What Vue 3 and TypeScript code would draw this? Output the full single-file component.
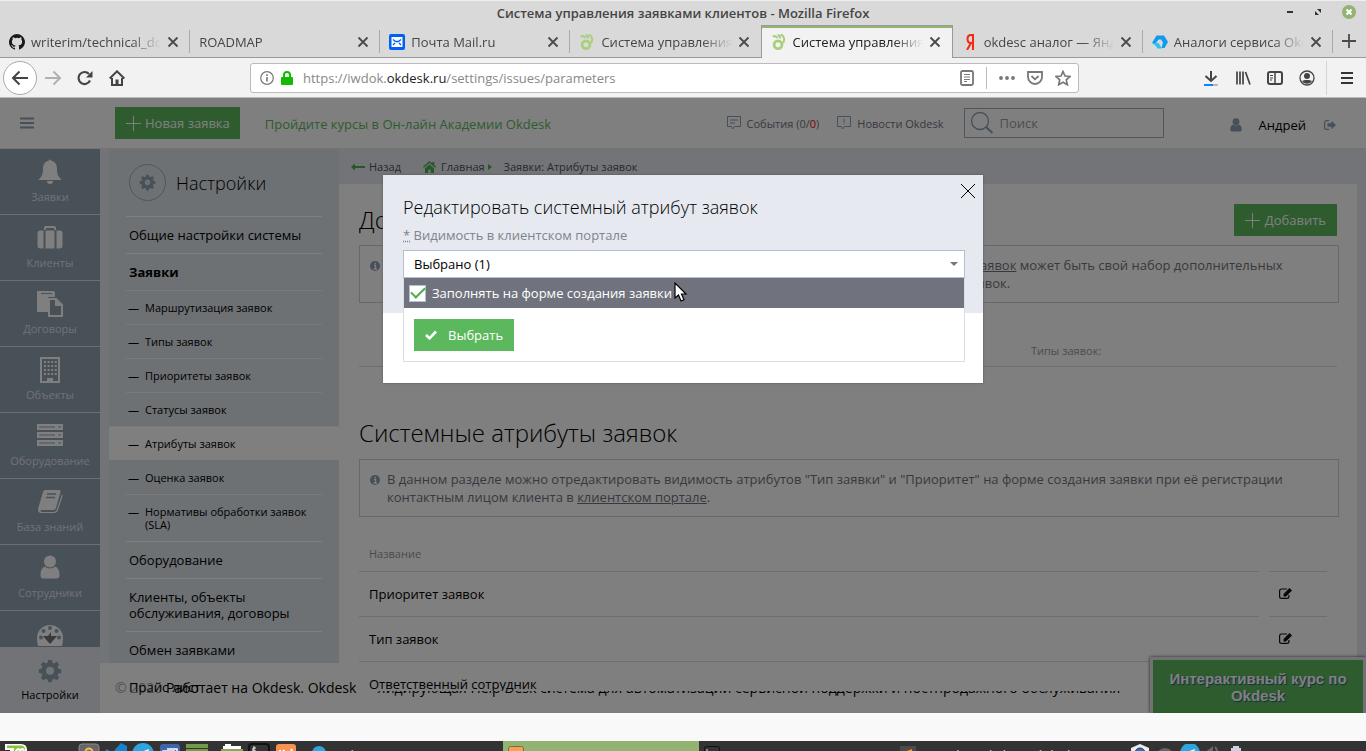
<script setup lang="ts">
import { ref } from 'vue'

interface Tab { title: string; icon: string; active?: boolean }
const tabs: Tab[] = [
  { title: 'writerim/technical_docs', icon: 'github' },
  { title: 'ROADMAP', icon: '' },
  { title: 'Почта Mail.ru', icon: 'mail' },
  { title: 'Система управления заявками', icon: 'ok' },
  { title: 'Система управления заявками', icon: 'ok', active: true },
  { title: 'okdesc аналог — Яндекс', icon: 'ya' },
  { title: 'Аналоги сервиса Okdesk', icon: 'poly' },
]

const nav = [
  { title: 'Заявки', icon: 'bell' },
  { title: 'Клиенты', icon: 'case' },
  { title: 'Договоры', icon: 'docs' },
  { title: 'Объекты', icon: 'building' },
  { title: 'Оборудование', icon: 'server' },
  { title: 'База знаний', icon: 'book' },
  { title: 'Сотрудники', icon: 'person' },
  { title: 'Отчеты', icon: 'gauge' },
]

interface MenuItem { title: string; kind: string }
const menu: MenuItem[] = [
  { title: 'Общие настройки системы', kind: 'main' },
  { title: 'Заявки', kind: 'main bold' },
  { title: 'Маршрутизация заявок', kind: 'sub' },
  { title: 'Типы заявок', kind: 'sub' },
  { title: 'Приоритеты заявок', kind: 'sub' },
  { title: 'Статусы заявок', kind: 'sub' },
  { title: 'Атрибуты заявок', kind: 'sub current' },
  { title: 'Оценка заявок', kind: 'sub after' },
  { title: 'Нормативы обработки заявок (SLA)', kind: 'sub' },
  { title: 'Оборудование', kind: 'main' },
  { title: 'Клиенты, объекты обслуживания, договоры', kind: 'main' },
  { title: 'Обмен заявками', kind: 'main' },
  { title: 'Прайс-лист', kind: 'main' },
]

const rows = ['Приоритет заявок', 'Тип заявок', 'Ответственный сотрудник']
const gearPath = 'M10 1h4l.6 3.1 2 .8 2.6-1.8 2.8 2.8-1.8 2.6.8 2 3.1.6v4l-3.1.6-.8 2 1.8 2.6-2.8 2.8-2.6-1.8-2 .8-.6 3.1h-4l-.6-3.1-2-.8-2.6 1.8L2 20.300l1.800-2.600-.8-2L-.1 15v-4l3.100-.6.8-2L2 5.900l2.800-2.800 2.600 1.800 2-.8zM12 8.500a4.300 4.300 0 1 0 0 8.600 4.300 4.300 0 0 0 0-8.600z'
const search = ref('')
const fill = ref(true)
const chosen = ref('one')
</script>

<template>
  <div class="desktop">
    <header class="titlebar">
      <span class="window-title">Система управления заявками клиентов - Mozilla Firefox</span>
      <div class="window-buttons">
        <button aria-label="Свернуть"><svg width="8" height="12" viewBox="0 0 8 12"><path d="M1 6h6" stroke="#333" stroke-width="2" /></svg></button>
        <button aria-label="Восстановить"><svg width="8" height="8" viewBox="0 0 8 8"><path d="M3 1h4v4zM1 3v4h4z" fill="#333" /></svg></button>
        <button aria-label="Закрыть"><svg width="14" height="14" viewBox="0 0 14 14"><circle cx="7" cy="7" r="7" fill="#92b372" /><path d="M4.500 4.500l5 5m0-5l-5 5" stroke="#fff" stroke-width="2" /></svg></button>
      </div>
    </header>

    <nav class="tabs">
      <div v-for="(t, i) in tabs" :key="i" class="tab" :class="{ active: t.active }">
        <svg v-if="t.icon === 'github'" class="fav" viewBox="0 0 16 16"><path fill="#1b1b1b" d="M8 0a8 8 0 0 0-2.530 15.590c.4.070.55-.17.55-.38v-1.490c-2.230.48-2.690-.95-2.690-.95-.36-.92-.89-1.170-.89-1.170-.73-.5.050-.49.050-.49.8.060 1.230.83 1.230.83.72 1.220 1.870.87 2.330.66.070-.52.280-.87.510-1.070-1.780-.2-3.650-.89-3.650-3.950 0-.87.310-1.590.82-2.150-.080-.2-.36-1.020.080-2.120 0 0 .67-.21 2.200.82a7.600 7.600 0 0 1 4 0c1.530-1.040 2.200-.82 2.200-.82.44 1.100.160 1.920.080 2.120.51.560.82 1.270.82 2.150 0 3.070-1.870 3.750-3.650 3.950.29.250.54.730.54 1.480v2.190c0 .21.150.46.55.38A8 8 0 0 0 8 0z" /></svg>
        <svg v-if="t.icon === 'mail'" class="fav" viewBox="0 0 16 16"><rect width="16" height="16" rx="2" fill="#005ff9" /><rect x="2.500" y="3" width="11" height="10" fill="#fff" /><path d="M4 5.500l2.500 2h3l2.500-2M4 11l2-2M12 11l-2-2" fill="none" stroke="#005ff9" stroke-width="1.300" /></svg>
        <svg v-if="t.icon === 'ok'" class="fav" viewBox="0 0 16 16"><circle cx="7" cy="10.700" r="3.900" fill="none" stroke="#a9cf7d" stroke-width="2.800" /><path d="M2 3c1-1.500 3-1 4.500 1M6.500 1c2 .5 2.700 2 2.500 3.500M9.500 .5c3.500 1 4.700 5 2.500 8.500" fill="none" stroke="#a9cf7d" stroke-width="2" /></svg>
        <svg v-if="t.icon === 'ya'" class="fav" viewBox="0 0 16 16"><path d="M11 0v16M11 1H9C6.500 1 5.500 3 5.500 5s1 4 3.500 4h2M9 9l-4 7" fill="none" stroke="#f32a0d" stroke-width="2" /></svg>
        <svg v-if="t.icon === 'poly'" class="fav" viewBox="0 0 16 16"><path d="M4.500 1.500h7.500l4 6.500-3.500 6H9.500l1.500-5.500-2-3H6.500L4 9H0z" fill="#1199ee" /><path d="M0 9h6.500l3.500 5.500H5.500L4 12z" fill="#25c4f4" /></svg>
        <a class="tab-title" href="#">{{ t.title }}</a>
        <button class="tab-close" aria-label="Закрыть вкладку"><svg width="12" height="12" viewBox="0 0 12 12"><path d="M1.500 1.500l9 9m0-9l-9 9" stroke="#4a4a4a" stroke-width="1.800" /></svg></button>
      </div>
      <button class="tab-new" aria-label="Новая вкладка"><svg width="14" height="14" viewBox="0 0 14 14"><path d="M7 0v14M0 7h14" stroke="#4a4a4a" stroke-width="1.800" /></svg></button>
    </nav>

    <div class="toolbar">
      <button class="back" aria-label="Назад"><svg width="18" height="16" viewBox="0 0 18 16"><path d="M17 8H2M8.500 1.500L2 8l6.500 6.500" fill="none" stroke="#444" stroke-width="2" /></svg></button>
      <button class="tool" aria-label="Вперед"><svg width="18" height="16" viewBox="0 0 18 16"><path d="M1 8h15M9.500 1.500L16 8l-6.500 6.500" fill="none" stroke="#b1b1b1" stroke-width="2" /></svg></button>
      <button class="tool" aria-label="Обновить"><svg width="16" height="16" viewBox="0 0 16 16"><path d="M13 10.500A6 6 0 1 1 12 4" fill="none" stroke="#444" stroke-width="2.200" /><path d="M15.500 1v6.500H9z" fill="#444" /></svg></button>
      <button class="tool" aria-label="Домой"><svg width="16" height="16" viewBox="0 0 16 16"><path d="M.7 8.500L8 1.300l7.300 7.200M3 8v7h10V8" fill="none" stroke="#444" stroke-width="2" /><path d="M6.500 15V9.500h3V15" fill="#444" /></svg></button>
      <div class="urlbar">
        <svg width="14" height="14" viewBox="0 0 14 14"><circle cx="7" cy="7" r="6.300" fill="none" stroke="#777" stroke-width="1.200" /><path d="M7 6v4.500M7 3.200V5" stroke="#777" stroke-width="1.600" /></svg>
        <svg class="lock" width="12" height="14" viewBox="0 0 12 14"><path d="M3 7V4a3 3 0 0 1 6 0v3" fill="none" stroke="#12bc00" stroke-width="2" /><rect y="6" width="12" height="8" rx="1" fill="#12bc00" /></svg>
        <span class="url">https://iwdok.<b>okdesk.ru</b>/settings/issues/parameters</span>
        <svg width="14" height="16" viewBox="0 0 14 16"><rect x="1" y="1" width="12" height="14" rx="1.500" fill="none" stroke="#777" stroke-width="1.800" /><path d="M4 4.500h6M4 7h6M4 9.500h6M4 11.500h3" stroke="#777" /></svg>
        <span class="url-split"></span>
        <svg width="16" height="4" viewBox="0 0 16 4"><circle cx="2" cy="2" r="1.900" fill="#777" /><circle cx="8" cy="2" r="1.900" fill="#777" /><circle cx="14" cy="2" r="1.900" fill="#777" /></svg>
        <svg width="16" height="14" viewBox="0 0 16 14"><path d="M1 1h14v5a7 7 0 0 1-14 0z" fill="none" stroke="#777" stroke-width="1.800" /><path d="M4.500 5L8 8.300 11.500 5" fill="none" stroke="#777" stroke-width="1.800" /></svg>
        <svg width="16" height="16" viewBox="0 0 16 16"><path d="M8 1.500l2 4.500 5 .5-3.700 3.300 1 4.900L8 12.200l-4.300 2.500 1-4.900L1 6.500 6 6z" fill="none" stroke="#777" stroke-width="1.700" /></svg>
      </div>
      <button class="tool" aria-label="Загрузки"><svg width="16" height="18" viewBox="0 0 16 18"><path d="M8 2v10M2.500 7L8 12l5.500-5" fill="none" stroke="#444" stroke-width="2" /><path d="M1 16h9" stroke="#0a84ff" stroke-width="2" /><path d="M10 16h5" stroke="#bbb" stroke-width="2" /></svg></button>
      <button class="tool" aria-label="Библиотека"><svg width="16" height="16" viewBox="0 0 16 16"><path d="M2 1.500v13M5 1.500v13M8 1.500v13M10.500 2l4.500 12.500" stroke="#444" stroke-width="1.700" /></svg></button>
      <button class="tool" aria-label="Боковая панель"><svg width="16" height="14" viewBox="0 0 16 14"><rect x="1" y="1" width="14" height="12" rx="2" fill="none" stroke="#444" stroke-width="2" /><path d="M8 1v12" stroke="#444" stroke-width="1.500" /><path d="M3 4.500h3M3 7h3M3 9h2" stroke="#444" /></svg></button>
      <button class="tool" aria-label="Аккаунт"><svg width="16" height="16" viewBox="0 0 16 16"><circle cx="8" cy="8" r="7" fill="none" stroke="#444" stroke-width="1.300" /><circle cx="8" cy="6" r="3" fill="#444" /><path d="M3 11c1.500-1.500 8.500-1.500 10 0-2 3.500-8 3.500-10 0z" fill="#444" /></svg></button>
      <button class="tool burger" aria-label="Меню"><svg width="12" height="12" viewBox="0 0 12 12"><path d="M0 1h12M0 6h12M0 11h12" stroke="#333" stroke-width="2" /></svg></button>
    </div>

    <main class="viewport">
      <div class="site">
        <header class="top">
          <button class="plain" aria-label="Свернуть меню"><svg width="14" height="12" viewBox="0 0 14 12"><path d="M0 1.500h14M0 6h14M0 10.500h14" stroke="#8e9fb3" stroke-width="2" /></svg></button>
          <button class="green new"><svg width="15" height="15" viewBox="0 0 15 15"><path d="M7.500 0v15M0 7.500h15" stroke="#fff" /></svg>Новая заявка</button>
          <a class="academy" href="#">Пройдите курсы в Он-лайн Академии Okdesk</a>
          <a class="top-link events" href="#"><svg width="14" height="14" viewBox="0 0 14 14"><path d="M.5.5h13v10h-6l-2 2.500-1-2.500h-4zM3 4h8M3 7h5" fill="none" stroke="#8e9fb3" /></svg><span>События (0/<b>0</b>)</span></a>
          <a class="top-link" href="#"><svg width="14" height="14" viewBox="0 0 14 14"><path d="M.5.5h13v10h-6l-2 2.500-1-2.500h-4zM7 3v3.500M7 7.500v1" fill="none" stroke="#8e9fb3" /></svg><span>Новости Okdesk</span></a>
          <label class="search"><svg width="24" height="24" viewBox="0 0 24 24"><circle cx="10" cy="10" r="8.500" fill="none" stroke="#8e9fb3" stroke-width="1.300" /><path d="M16 16l6.500 6" stroke="#8e9fb3" stroke-width="2" /></svg><input v-model="search" type="text" placeholder="Поиск" aria-label="Поиск" /></label>
          <svg class="user" width="12" height="14" viewBox="0 0 12 14"><circle cx="6" cy="3.700" r="3.400" fill="#8e9fb3" /><path d="M3 6.500c2 1.300 4 1.300 6 0 2 .5 2.700 2.500 2.700 5 0 1.500-1 2-2 2H2.300c-1 0-2-.5-2-2 0-2.500.7-4.500 2.700-5z" fill="#8e9fb3" /></svg>
          <a class="name" href="#">Андрей</a>
          <button class="plain exit" aria-label="Выход"><svg width="12" height="10" viewBox="0 0 12 10"><path d="M5 .6H2.500Q.6.6.6 2.500v5q0 1.900 1.900 1.900H5" fill="none" stroke="#8e9fb3" stroke-width="1.200" /><path d="M3.500 3.300h4V.7L12 5 7.500 9.300V6.700h-4z" fill="#8e9fb3" /></svg></button>
        </header>

        <div class="work">
          <nav class="side">
            <div class="side-list">
              <a v-for="n in nav" :key="n.title" class="side-item" href="#">
                <svg width="26" height="26" viewBox="0 0 26 26" fill="#fff">
                  <path v-if="n.icon === 'bell'" d="M12 1.500a1 1 0 0 1 2 0c4.500 1 6 4.500 6 8.500 0 5.500 1.500 8 5 11H1c3.500-3 5-5.500 5-11 0-4 1.500-7.500 6-8.500zM10 22h6a3 3 0 0 1-6 0z" />
                  <g v-else-if="n.icon === 'case'"><path d="M7 5V3q0-2 2-2h8q2 0 2 2v2h-2V3H9v2z" /><path d="M5 5h2v19H3q-3 0-3-3V8q0-3 3-3h1zM8 5h10v19H8zM19 5h4q3 0 3 3v13q0 3-3 3h-4z" stroke="#90a0b1" stroke-width="1" /></g>
                  <g v-else-if="n.icon === 'docs'"><path d="M0 0h16q2 0 2 2v4h-7v15H1q-1 0-1-1zM4 2v1h11V2z" fill-rule="evenodd" /><path d="M12 8h7l6 6v11H12z" fill="#90a0b1" stroke="#fff" stroke-width="2" /><path d="M18 8v7h7z" /></g>
                  <g v-else-if="n.icon === 'building'"><path d="M3 0h20v26H3zM5 2v22h5v-3h6v3h5V2z" fill-rule="evenodd" /><path d="M7 5h13M7 9h13M7 13h13M7 17h13" stroke="#fff" stroke-width="2" stroke-dasharray="2 1.600" /></g>
                  <g v-else-if="n.icon === 'server'"><path d="M0 1h26v6H0zM0 9h26v6H0zM0 17h26v6H0z" /><path d="M2 4h16M2 12h16M2 20h16M21 4h3M21 12h3M21 20h3" stroke="#90a0b1" stroke-width="1" /></g>
                  <g v-else-if="n.icon === 'book'"><path d="M8 1h14q2 0 1.500 2L19 19q-.5 2-2.500 2H4q-1 2 1 2h12q2 0 3-3l5-15q1 2 0 4l-4 12q-1 3-4 3H4q-3 0-3-4L6 3q.5-2 2-2z" /><path d="M10 5h9M9 8.500h9" stroke="#90a0b1" stroke-width="1.500" /></g>
                  <g v-else-if="n.icon === 'person'"><circle cx="13" cy="6.500" r="6" /><path d="M8 11.500c3 2.500 7 2.500 10 0 3 1 4.500 4 4.500 8 0 3-1 4-3 4h-13c-2 0-3-1-3-4 0-4 1.500-7 4.500-8z" /></g>
                  <g v-else><path d="M1 25Q0 21 0 17a13 13 0 0 1 26 0q0 4-1 8z" /><g fill="#90a0b1"><circle cx="13" cy="7" r="2" /><circle cx="6.500" cy="10" r="2" /><circle cx="19.500" cy="10" r="2" /><circle cx="4" cy="16.500" r="2" /><circle cx="22" cy="16.500" r="2" /></g><path d="M6 15h5l3-4v4h6l-7 8z" fill="#70707a" /></g>
                </svg>
                <span>{{ n.title }}</span>
              </a>
            </div>
            <a class="side-item chosen" href="#">
              <svg width="24" height="24" viewBox="-1 0 26 26"><path fill="#90a0b1" fill-rule="evenodd" :d="gearPath" /></svg>
              <span>Настройки</span>
            </a>
          </nav>

          <aside class="menu">
            <div class="menu-head">
              <span class="ring"><svg width="17" height="17" viewBox="-1 0 26 26"><path fill="#90a0b1" fill-rule="evenodd" :d="gearPath" /></svg></span>
              <h2>Настройки</h2>
            </div>
            <ul>
              <li v-for="m in menu" :key="m.title" :class="m.kind"><a href="#">{{ m.title }}</a></li>
            </ul>
          </aside>

          <section class="content">
            <div class="crumbs">
              <a href="#"><svg width="14" height="8" viewBox="0 0 14 8"><path d="M0 4l4-3.500V3h10v2H4v2.500z" fill="#4cae4c" /></svg>Назад</a>
              <a class="home" href="#"><svg width="13" height="12" viewBox="0 0 13 12"><path d="M6.500 0l2.800 2.400V1h2v3.100L13 5.700l-.9 1L6.500 1.900.9 6.700l-.9-1zM2 7.300l4.500-3.900L11 7.300V12H7.700V8.500H5.300V12H2z" fill="#4cae4c" /></svg>Главная<svg class="caret" width="4" height="6" viewBox="0 0 4 6"><path d="M0 0l4 3-4 3z" fill="#4cae4c" /></svg></a>
              <span>Заявки: Атрибуты заявок</span>
            </div>
            <div class="card">
              <div class="sheet">
                <div class="head-row">
                  <h1>Дополнительные атрибуты заявок</h1>
                  <button class="green add"><svg width="15" height="15" viewBox="0 0 15 15"><path d="M7.500 0v15M0 7.500h15" stroke="#fff" /></svg>Добавить</button>
                </div>
                <div class="info">
                  <svg width="10" height="10" viewBox="0 0 10 10"><circle cx="5" cy="5" r="5" fill="#8e9fb3" /><path d="M4 4.500h1.500V8M3.500 8h3.500M4.500 2.500h1.300" fill="none" stroke="#fff" stroke-width="1.300" /></svg>
                  <p>Вы можете добавить различные дополнительные атрибуты для заявок. У каждого из <a href="#">типов заявок</a> может быть свой набор дополнительных<br />атрибутов. Значения атрибутов заполняются при создании и редактировании всех видов заявок.</p>
                </div>
                <table class="first">
                  <thead><tr><th></th><th class="types">Типы заявок:</th></tr></thead>
                </table>
                <h1 class="second-title">Системные атрибуты заявок</h1>
                <div class="info">
                  <svg width="10" height="10" viewBox="0 0 10 10"><circle cx="5" cy="5" r="5" fill="#8e9fb3" /><path d="M4 4.500h1.500V8M3.500 8h3.500M4.500 2.500h1.300" fill="none" stroke="#fff" stroke-width="1.300" /></svg>
                  <p>В данном разделе можно отредактировать видимость атрибутов "Тип заявки" и "Приоритет" на форме создания заявки при её регистрации<br />контактным лицом клиента в <a href="#">клиентском портале</a>.</p>
                </div>
                <table class="second">
                  <thead><tr><th>Название</th><td class="space"></td><th class="edit"></th></tr></thead>
                  <tbody>
                    <tr v-for="r in rows" :key="r">
                      <td>{{ r }}</td><td class="space"></td>
                      <td class="edit"><button class="plain" aria-label="Изменить"><svg width="13" height="11" viewBox="0 0 13 11"><path d="M8 1H2.500Q.6 1 .6 3v5.500q0 1.900 1.900 1.900h5.500q1.900 0 1.900-1.900V7" fill="none" stroke="#111" stroke-width="1.200" /><path d="M10.500 0L13 2.500 7 8.500H4.500V6z" fill="#111" /></svg></button></td>
                    </tr>
                  </tbody>
                </table>
              </div>
            </div>
          </section>
        </div>

        <footer class="foot"><span>© 2020</span> Работает на Okdesk. Okdesk — лидирующая Help Desk система для автоматизации сервисной поддержки и постпродажного обслуживания</footer>
        <button class="course">Интерактивный курс по Okdesk</button>
      </div>

      <div class="shade">
        <form class="modal" role="dialog" aria-label="Редактировать системный атрибут заявок" @submit.prevent>
          <div class="modal-top">
            <h3>Редактировать системный атрибут заявок</h3>
            <button class="plain close" type="button" aria-label="Закрыть"><svg width="14" height="14" viewBox="0 0 14 14"><path d="M0 0l14 14M14 0L0 14" stroke="#000" stroke-width="1" /></svg></button>
            <label class="field" for="visibility"><abbr title="обязательно">*</abbr> Видимость в клиентском портале</label>
            <div class="picker">
              <select id="visibility" v-model="chosen"><option value="one">Выбрано (1)</option></select>
              <div class="drop">
                <label class="option"><input v-model="fill" type="checkbox" /><span>Заполнять на форме создания заявки</span></label>
                <button class="green pick" type="submit"><svg width="12" height="10" viewBox="0 0 12 10"><path d="M1 5l3.500 3.300L11 1.500" fill="none" stroke="#fff" stroke-width="2.600" /></svg>Выбрать</button>
                <svg class="cursor" width="14" height="20" viewBox="0 0 14 20"><path d="M1 1v15l3.500-3 2.500 6 3-1.300-2.500-5.700H12z" fill="#fff" stroke="#000" stroke-width="1.200" /></svg>
              </div>
            </div>
          </div>
        </form>
      </div>
    </main>

    <div class="gap"></div>
    <footer class="taskbar">
      <div class="launch">
        <svg width="22" height="20" viewBox="0 0 22 20"><path d="M0 1h16q6 0 6 6v13H5V7H0z" fill="#fff" /><path d="M2 2.500h14q4 0 4 4V20H7V5H2z" fill="#86c740" /><path d="M8 5v10M11 15V8q3-4 4 0v7M15 8q3-4 4 0" fill="none" stroke="#fff" stroke-width="2" /></svg>
        <span class="start">Меню</span>
        <svg width="22" height="20" viewBox="0 0 22 20"><rect x="1" y="1" width="20" height="20" rx="3" fill="#666" stroke="#888" /><circle cx="11" cy="9" r="3.500" fill="none" stroke="#f2bd4c" stroke-width="2" /></svg>
        <svg width="22" height="20" viewBox="0 0 22 20"><path d="M0 8l2-2 5 4 9-10 6 3v17h-6V8l-6 6-8 4z" fill="#1583cf" /></svg>
        <svg width="22" height="20" viewBox="0 0 22 20"><circle cx="11" cy="11" r="11" fill="#2da5df" /><path d="M4 11l13-5-3 12z" fill="#fff" /></svg>
        <svg width="22" height="20" viewBox="0 0 22 20"><rect x="1" y="1" width="20" height="20" rx="3" fill="#3f65ad" /><path d="M8 6h10v10H4V8h12" fill="none" stroke="#fff" stroke-width="1.500" /></svg>
        <svg width="22" height="20" viewBox="0 0 22 20"><path d="M0 1h22v4H0zM0 6h22v14H0z" fill="#729a48" /></svg>
        <svg class="later" width="22" height="20" viewBox="0 0 22 20"><path d="M2 5V3h2V1h6v2h10v3H2z" fill="#fff" /><path d="M0 6h22v14H0z" fill="#80ac5b" /></svg>
        <svg width="22" height="20" viewBox="0 0 22 20"><rect x="1" y="1" width="20" height="20" rx="3" fill="#333" stroke="#111" stroke-width="2" /><path d="M8 5H5v3h3v3H4M6 3v9" fill="none" stroke="#eee" /></svg>
        <svg width="22" height="20" viewBox="0 0 22 20"><rect x="1" y="1" width="20" height="20" rx="3" fill="#f7934c" /><path d="M5 7v6M8 7l3 3M16 6q2 3 0 6" fill="none" stroke="#fff" stroke-width="2" /></svg>
      </div>
      <a class="task" href="#"><svg width="14" height="14" viewBox="0 0 14 14"><circle cx="7" cy="7" r="7" fill="#2da5df" /></svg>Telegram</a>
      <a class="task lit" href="#"><svg width="16" height="16" viewBox="0 0 16 16"><rect x=".5" y=".5" width="15" height="15" rx="2" fill="#f9a050" stroke="#7d6a45" /><path d="M4 5l3 3 5-3" stroke="#fff" fill="none" /></svg>Система управления</a>
      <a class="task" href="#"><svg width="16" height="16" viewBox="0 0 16 16"><rect x=".5" y=".5" width="15" height="15" rx="2" fill="#333" stroke="#111" /><path d="M3 3v4" stroke="#ddd" /></svg>writerim Screen Free Hata</a>
      <a class="task" href="#"><svg width="16" height="16" viewBox="0 0 16 16"><rect width="16" height="16" fill="#4b4b4b" /><path d="M4 6l8-3v4l-8 3z" fill="#ff9800" /></svg>~/technical_docs/okdesk</a>
      <div class="tray">
        <svg width="20" height="18" viewBox="0 0 20 18"><path d="M10 0l9 4v9l-9 5-9-5V4z" fill="#eee" /><circle cx="10" cy="9" r="5" fill="#3b6eb0" stroke="#173b70" /></svg>
        <svg width="18" height="18" viewBox="0 0 18 18"><circle cx="9" cy="13" r="9" fill="#666" /></svg>
        <svg width="20" height="18" viewBox="0 0 20 18"><circle cx="10" cy="9" r="10" fill="#2da5df" /><path d="M4 9l11-4-3 9z" fill="#fff" /></svg>
        <svg width="14" height="18" viewBox="0 0 14 18"><path d="M1 8l5-4v9M9 3q4 4 0 9" fill="none" stroke="#666" stroke-width="2" /></svg>
        <svg class="battery" width="12" height="18" viewBox="0 0 12 18"><path d="M3 2h6v2h2v12H1V4h2z" fill="#ccd2dc" /></svg>
        <time>Пт 10 Jan, 14:28</time>
      </div>
    </footer>
  </div>
</template>

<style>
html, body { margin: 0; height: 100%; }
</style>

<style scoped>
* { box-sizing: border-box; }
.desktop { height: 100vh; min-height: 500px; display: flex; flex-direction: column; overflow: hidden; background: #f9f9f9; font-family: "Open Sans", "Noto Sans", sans-serif; font-size: 13px; color: #000; }
button { font: inherit; border: 0; padding: 0; background: none; cursor: pointer; }
a { color: inherit; text-decoration: none; }
svg { flex: none; display: block; }
h1, h2, h3, p, ul { margin: 0; padding: 0; }
h1, h2, h3 { font-weight: 300; }

.titlebar { flex: none; position: relative; height: 25px; display: flex; align-items: center; justify-content: center; background: #d9d9d9; border-top: 1px solid #eee; color: #454545; }
.window-title { font-weight: 600; line-height: 18px; }
.window-buttons { position: absolute; right: 10px; top: 4px; display: flex; align-items: center; gap: 20px; }

.tabs { flex: none; display: flex; height: 33px; background: #d9d9d9; color: #454545; }
.tab { flex: 1 1 0; min-width: 0; display: flex; align-items: center; gap: 6px; padding: 1px 11px 0 9px; border-bottom: 1px solid #999; position: relative; }
.tab:not(.active)::before { content: ""; position: absolute; right: 0; top: 5px; bottom: 4px; width: 1px; background: #aaa; }
.tab:nth-child(4)::before { display: none; }
.tab.active { padding: 0 11px 0 9px; background: #f2f2f2; border: 1px solid #999; border-bottom: 0; box-shadow: inset 0 2px #92b372; color: #222; }
.fav { width: 16px; height: 16px; }
.tab-title { flex: 1; min-width: 0; overflow: hidden; white-space: nowrap; line-height: 20px; mask-image: linear-gradient(to right, #000 calc(100% - 30px), transparent); }
.tab-new { width: 33px; display: flex; align-items: center; justify-content: center; border-bottom: 1px solid #999; }

.toolbar { flex: none; height: 40px; display: flex; align-items: center; padding: 0 13px 0 3px; background: #f2f2f2; border-bottom: 1px solid #bbb; }
.back { width: 34px; height: 34px; border: 1px solid #aaa; border-radius: 50%; background: #fff; display: grid; place-items: center; }
.tool { width: 32px; height: 34px; display: grid; place-items: center; }
.burger { width: 12px; margin-left: 3px; padding-left: 14px; border-left: 1px solid #d5d5d5; box-sizing: content-box; }
.urlbar { flex: 1; height: 30px; margin: 0 116px 0 117px; display: flex; align-items: center; gap: 12px; padding: 0 7px 0 9px; background: #fff; border: 1px solid #bbb; border-radius: 3px; }
.lock { margin-left: -5px; }
.url { flex: 1; color: #888; white-space: nowrap; margin-left: -2px; }
.url b { font-weight: 400; color: #222; }
.url-split { width: 1px; height: 22px; background: #bbb; }

.viewport { flex: 1; min-height: 0; position: relative; overflow: hidden; }
.site { height: 100%; display: flex; flex-direction: column; background: #e6e9f0; position: relative; }
.top { flex: none; height: 51px; display: flex; align-items: center; padding: 0 30px 0 20px; background: #fff; border-bottom: 1px solid #e9e9ee; }
.plain { display: inline-flex; }
.green { background: #5cb85c; color: #fff; height: 32px; display: flex; align-items: center; }
.new { margin-left: 81px; padding: 0 10px 0 11px; gap: 4px; }
.academy { margin: 2px 0 0 25px; color: #5cb85c; }
.top-link { display: flex; align-items: center; gap: 6px; margin-left: 18px; font-size: 11px; color: #70737d; }
.top-link b { font-weight: 400; color: #f00; }
.events { margin-left: auto; }
.search { display: flex; align-items: center; width: 200px; height: 30px; margin-left: 20px; padding-left: 5px; border: 1px solid #a0a8b8; }
.search input { width: 150px; margin-left: 6px; padding: 0; border: 0; outline: 0; background: none; font: inherit; }
.search input::placeholder { color: #9a9aa2; opacity: 1; }
.user { margin: 3px 0 0 66px; }
.name { margin: 4px 18px 0 17px; }
.exit { margin-top: 3px; }

.work { flex: 1; min-height: 0; display: flex; align-items: stretch; position: relative; z-index: 1; }
.side { flex: none; width: 100px; display: flex; flex-direction: column; }
.side-list { flex: 1; min-height: 0; overflow: hidden; background: #90a0b1; }
.side-item { height: 66px; display: flex; flex-direction: column; align-items: center; gap: 5px; padding-top: 10px; border-bottom: 1px solid #d8dce2; color: #e0e4e9; font-size: 11px; line-height: 14px; }
.chosen { flex: none; padding-top: 12px; background: #e5e6ee; color: #000; border: 0; }
.menu { flex: none; width: 230px; margin: 0 0 50px 9px; background: #dbe2e8; }
.menu-head { height: 67px; display: flex; align-items: center; gap: 10px; padding: 0 20px; }
.ring { width: 37px; height: 37px; border: 1px solid #a5a8be; border-radius: 50%; display: grid; place-items: center; }
.menu-head h2 { font-size: 18px; line-height: 26px; }
.menu ul { list-style: none; }
.menu li { margin: 0 17px; border-top: 1px solid #fff; }
.menu .main { padding: 10px 3px; line-height: 16px; }
.menu .bold { font-weight: 700; }
.menu .sub { padding: 10px 3px 10px 19px; font-size: 11px; line-height: 13px; position: relative; border-color: #f3f5f7; }
.menu .sub::before { content: "—"; position: absolute; left: 2px; top: 10px; }
.menu .current { margin: 0; padding-left: 36px; background: #fff; }
.menu .current::before { left: 19px; }
.menu .after { border-top-color: transparent; }

.content { flex: 1; min-width: 0; display: flex; flex-direction: column; margin-bottom: 50px; padding-right: 9px; }
.crumbs { flex: none; height: 35px; display: flex; align-items: center; gap: 12px; padding: 0 12px; font-size: 11px; color: #50535d; }
.crumbs a { display: flex; align-items: center; gap: 4px; }
.crumbs .home { margin-left: 10px; gap: 5px; }
.crumbs .caret { margin-left: -2px; }
.card { flex: 1; min-height: 0; padding: 0 18px 0 20px; background: #fff; display: flex; flex-direction: column; }
.sheet { flex: 1; min-height: 0; margin-bottom: -28px; overflow: hidden; background: #fff; padding-top: 20px; }
.head-row { display: flex; justify-content: space-between; align-items: center; padding-right: 2px; margin-bottom: 9px; }
h1 { font-size: 24px; line-height: 32px; white-space: nowrap; }
.add { padding: 0 11px; gap: 5px; }
.info { display: flex; gap: 7px; padding: 10px; height: 58px; border: 1px solid #cdd0da; color: #70737d; line-height: 18px; }
.info svg { margin-top: 5px; }
.info p { white-space: nowrap; }
.info a { text-decoration: underline; }
table { border-spacing: 0; width: 100%; }
th { font-size: 11px; line-height: 16px; font-weight: 400; text-align: left; color: #9599a3; padding: 40px 10px 7px; border-bottom: 1px solid #dcdde2; }
.first { width: calc(100% - 2px); }
.types { width: 316px; }
.second-title { margin: 50px 0 10px; }
.second { width: calc(100% - 12px); }
.second th { padding: 29px 10px 9px; }
.second td { height: 45px; padding: 0 10px; border-bottom: 1px solid #dcdde2; }
.second .edit { width: 58px; }
.second td.space { width: 10px; padding: 0; border: 0; }
.second thead td { height: auto; }

.foot { position: absolute; left: 100px; right: 0; bottom: 0; height: 50px; padding: 0 15px; background: #fff; font-size: 14px; line-height: 50px; white-space: nowrap; overflow: hidden; }
.foot span { color: #8e9fb3; }
.course { position: absolute; z-index: 2; right: 0; bottom: 0; width: 216px; height: 56px; padding: 0 12px; border: 3px solid #e4e4ea; border-bottom: 0; background: #5cb85c; color: #fff; font: 700 15px/17px "Liberation Sans", Arial, sans-serif; text-shadow: 1px 1px 1px #2e5687; box-shadow: 0 0 3px #445; }

.shade { position: absolute; inset: 0; z-index: 5; background: rgba(0, 0, 0, .5); padding-top: 77px; }
.modal { width: 600px; max-width: 94%; margin: 0 auto; padding-bottom: 70px; background: #fff; box-shadow: 0 0 2px #555; }
.modal-top { position: relative; padding: 19px 18px 35px 20px; background: #e6e9ef; }
.modal h3 { font-size: 18px; line-height: 26px; }
.close { position: absolute; right: 8px; top: 9px; }
.field { display: block; margin: 5px 0; color: #80838d; line-height: 20px; }
.field abbr { text-decoration: underline dotted; }
.picker { position: relative; }
select { display: block; width: 100%; height: 28px; padding: 0 10px; border: 1px solid #b4c0d0; border-radius: 0; outline: 0; appearance: none; background: #fff; font: inherit; color: #000; }
.picker::after { content: ""; position: absolute; right: 7px; top: 12px; border: 4px solid transparent; border-top-color: #777; border-bottom: 0; }
.drop { position: absolute; left: 0; right: 0; top: 28px; background: #fff; border: 1px solid #ddd; border-top: 0; padding-bottom: 10px; }
.option { display: flex; align-items: center; gap: 6px; height: 30px; padding: 0 5px; background: #70737d; color: #fff; }
.option input { appearance: none; margin: 0; width: 17px; height: 17px; border: 1px solid #b4c0d0; background: #fff; display: grid; place-items: center; }
.option input:checked::before { content: ""; width: 12px; height: 6px; border: solid #4cae4c; border-width: 0 0 2px 2px; transform: translateY(-2px) rotate(-45deg); }
.pick { margin: 11px 10px 0; padding: 0 11px; gap: 11px; }
.cursor { position: absolute; left: 270px; top: 4px; }

.gap { flex: none; height: 28px; background: #f9f9f9; }
.taskbar { flex: none; height: 10px; overflow: hidden; display: flex; align-items: flex-start; background: #333; color: #ddd; line-height: 18px; }
.launch { flex: none; width: 307px; display: flex; gap: 5px; padding: 2px 0 0 5px; }
.start { width: 41px; padding-top: 3px; }
.launch .later { margin-left: 8px; }
.task { flex: 1 1 0; min-width: 0; display: flex; gap: 10px; padding: 5px 0 0 5px; height: 40px; white-space: nowrap; overflow: hidden; }
.lit { background: #92b372; color: #fff; }
.tray { flex: none; width: 275px; display: flex; gap: 6px; padding: 3px 0 0 39px; }
.battery { margin-left: 4px; }
.tray time { padding-top: 2px; margin-left: 4px; white-space: nowrap; }
</style>
